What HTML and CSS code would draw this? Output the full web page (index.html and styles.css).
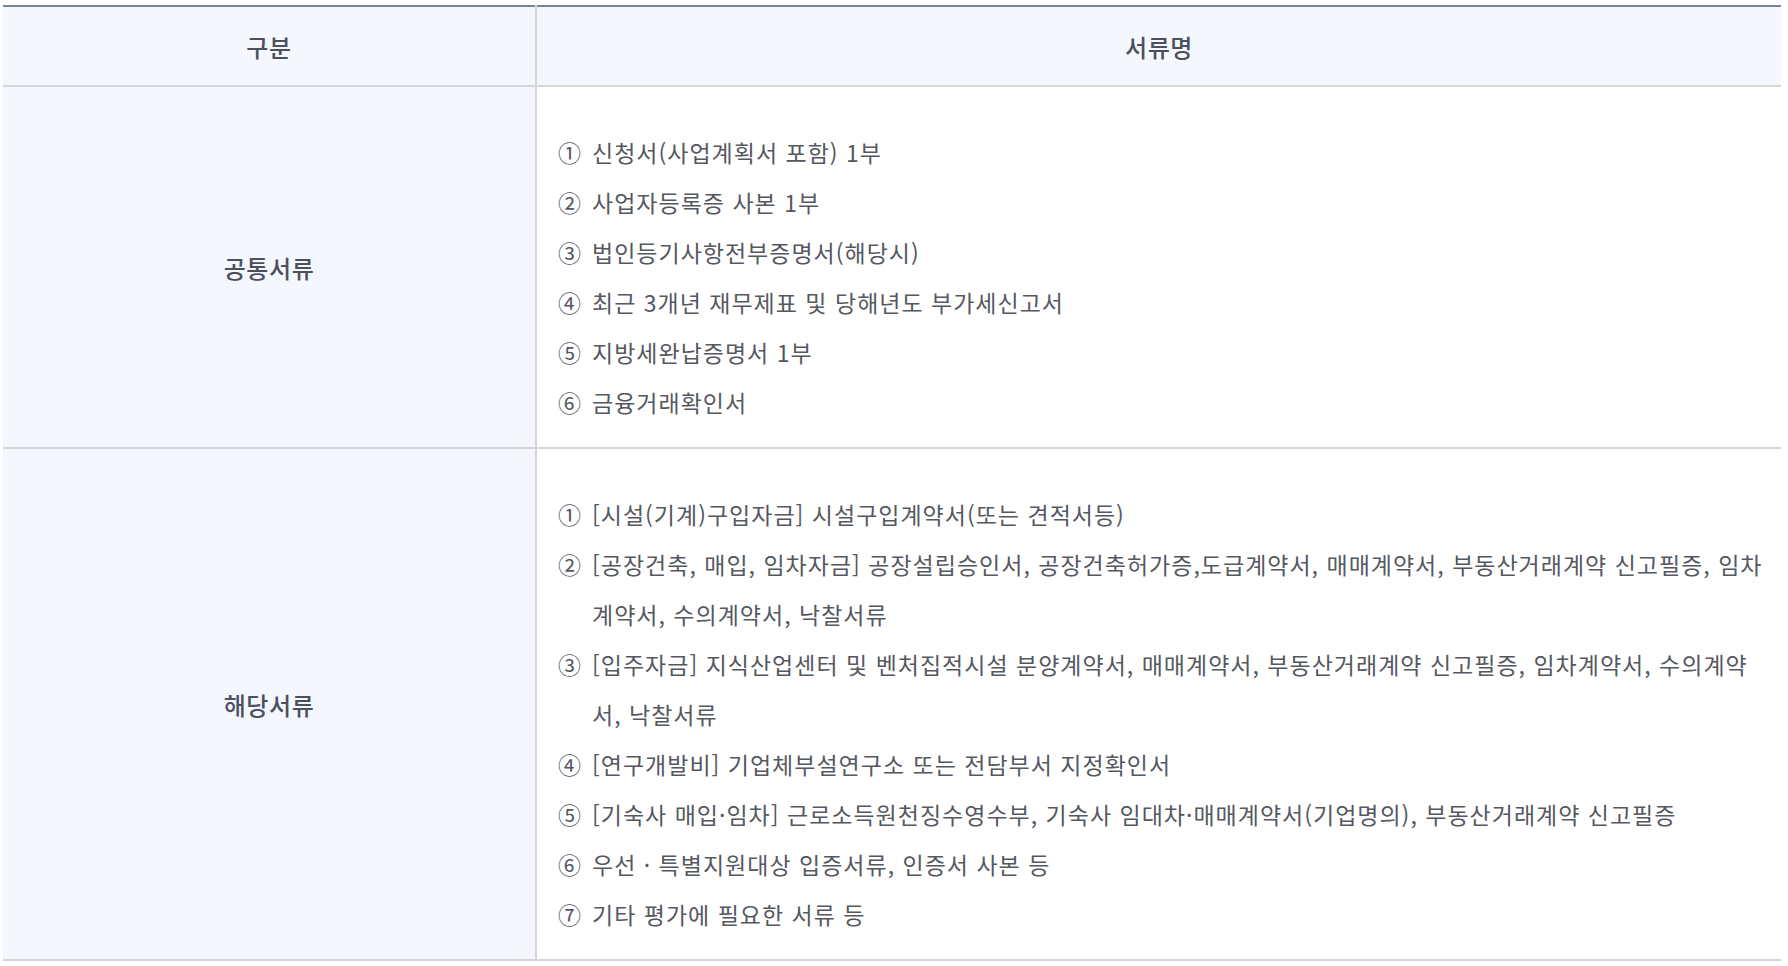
FILE: index.html
```html
<!DOCTYPE html>
<html lang="ko">
<head>
<meta charset="utf-8">
<title>서류</title>
<link rel="stylesheet" href="styles.css">
</head>
<body>
<table class="doc-table">
  <colgroup>
    <col class="col-cat">
    <col class="col-docs">
  </colgroup>
  <thead>
    <tr>
      <th class="head-cell">구분</th>
      <th class="head-cell">서류명</th>
    </tr>
  </thead>
  <tbody>
    <tr>
      <th class="cat-cell">공통서류</th>
      <td class="docs-cell">
        <ul class="doc-list">
          <li><span class="num">①</span><span class="txt">신청서(사업계획서 포함) 1부</span></li>
          <li><span class="num">②</span><span class="txt">사업자등록증 사본 1부</span></li>
          <li><span class="num">③</span><span class="txt">법인등기사항전부증명서(해당시)</span></li>
          <li><span class="num">④</span><span class="txt">최근 3개년 재무제표 및 당해년도 부가세신고서</span></li>
          <li><span class="num">⑤</span><span class="txt">지방세완납증명서 1부</span></li>
          <li><span class="num">⑥</span><span class="txt">금융거래확인서</span></li>
        </ul>
      </td>
    </tr>
    <tr>
      <th class="cat-cell">해당서류</th>
      <td class="docs-cell">
        <ul class="doc-list">
          <li><span class="num">①</span><span class="txt">[시설(기계)구입자금] 시설구입계약서(또는 견적서등)</span></li>
          <li><span class="num">②</span><span class="txt">[공장건축, 매입, 임차자금] 공장설립승인서, 공장건축허가증,도급계약서, 매매계약서, 부동산거래계약 신고필증, 임차계약서, 수의계약서, 낙찰서류</span></li>
          <li><span class="num">③</span><span class="txt">[입주자금] 지식산업센터 및 벤처집적시설 분양계약서, 매매계약서, 부동산거래계약 신고필증, 임차계약서, 수의계약서, 낙찰서류</span></li>
          <li><span class="num">④</span><span class="txt">[연구개발비] 기업체부설연구소 또는 전담부서 지정확인서</span></li>
          <li><span class="num">⑤</span><span class="txt">[기숙사 매입·임차] 근로소득원천징수영수부, 기숙사 임대차·매매계약서(기업명의), 부동산거래계약 신고필증</span></li>
          <li><span class="num">⑥</span><span class="txt">우선 · 특별지원대상 입증서류, 인증서 사본 등</span></li>
          <li><span class="num">⑦</span><span class="txt">기타 평가에 필요한 서류 등</span></li>
        </ul>
      </td>
    </tr>
  </tbody>
</table>
</body>
</html>
```

FILE: styles.css
```css
html, body {
  margin: 0;
  padding: 0;
  background: #ffffff;
}

body {
  padding: 5px 7px 0 3px;
  font-family: "Noto Sans CJK KR", "Noto Sans", sans-serif;
}

.doc-table {
  width: 1778px;
  border-collapse: collapse;
  border-top: 2px solid #7f8397;
  table-layout: fixed;
}

.col-cat {
  width: 533px;
}

.doc-table th,
.doc-table td {
  padding: 0;
  border-bottom: 2px solid #d6d6d8;
}

.head-cell {
  height: 78px;
  background: #f4f7fe;
  color: #4b4f5e;
  font-size: 24px;
  letter-spacing: 0.6px;
  font-weight: 500;
  text-align: center;
  vertical-align: middle;
}

.head-cell + .head-cell,
.docs-cell {
  border-left: 2px solid #d6d6d8;
}

.cat-cell {
  background: #f4f7fe;
  color: #4b4f5e;
  font-size: 24px;
  letter-spacing: 0.6px;
  font-weight: 500;
  text-align: center;
  vertical-align: middle;
}

.docs-cell {
  background: #ffffff;
  padding: 40px 11px 20px 21px !important;
  vertical-align: top;
}

.doc-list {
  list-style: none;
  margin: 0;
  padding: 0;
}

.doc-list li {
  display: flex;
  line-height: 50px;
  font-size: 23px;
  letter-spacing: 1px;
  color: #55585f;
}

.num {
  flex: 0 0 34px;
  letter-spacing: 0;
}

.txt {
  flex: 1;
}
```
